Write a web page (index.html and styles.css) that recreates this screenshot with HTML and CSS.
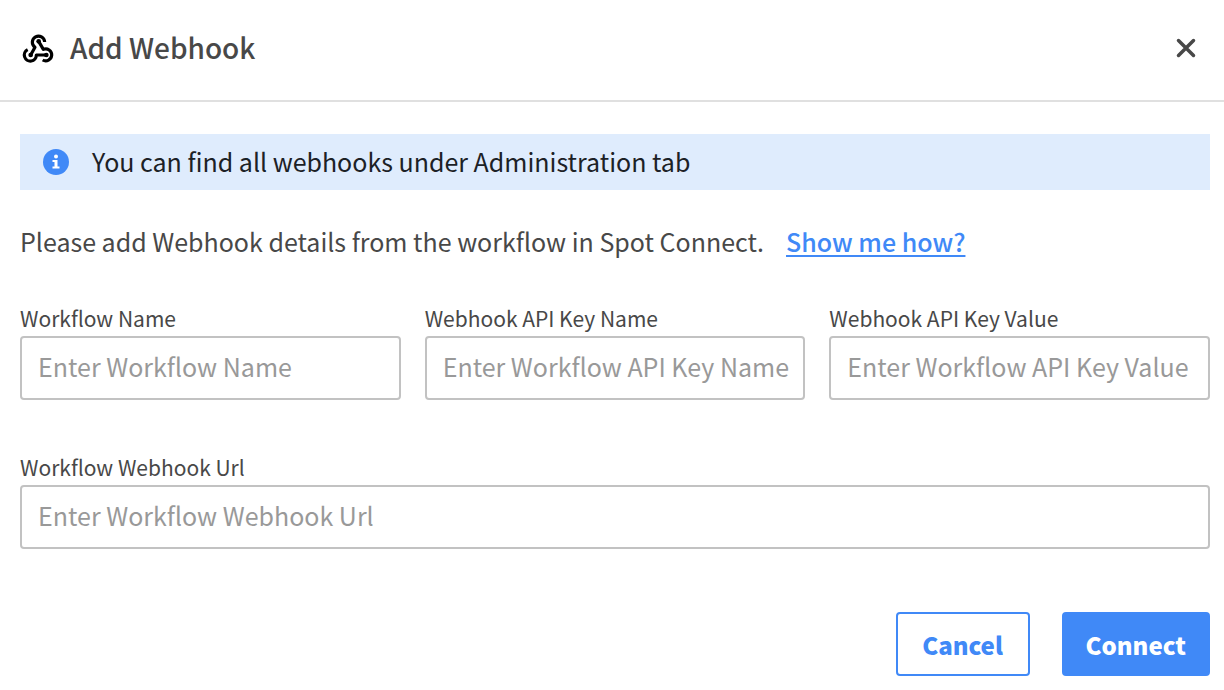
FILE: index.html
```html
<!DOCTYPE html>
<html lang="en">
<head>
<meta charset="utf-8">
<title>Add Webhook</title>
<link rel="stylesheet" href="styles.css">
</head>
<body>
<main class="dialog">
  <header class="dialog-header">
    <svg class="logo" viewBox="24 18 96 96" aria-hidden="true"><g fill="none" stroke="#000" stroke-width="9.500" stroke-linejoin="round"><path d="M50 87L63 64A18.500 18.500 0 1 1 92 48"/><path d="M74 46L88 70A18 18 0 1 1 86 102"/><path d="M97 87H67A18 18 0 1 1 41 71"/></g><g><circle cx="74" cy="46" r="7"/><circle cx="50" cy="87" r="7"/><circle cx="97" cy="87" r="7"/></g></svg>
    <h1 class="title">Add Webhook</h1>
    <button class="close" type="button" aria-label="Close"><svg viewBox="0 0 20 20"><path d="M2.500 2.500l15 15M17.500 2.500l-15 15"/></svg></button>
  </header>
  <form class="content">
    <div class="notice">
      <svg class="info" viewBox="0 0 26 26" aria-hidden="true"><circle cx="13" cy="13" r="13" fill="#4089f7"/><circle cx="13" cy="7.500" r="2" fill="#fff"/><path fill="#fff" d="M9.500 11h5v6.500h2v2h-7v-2h2V13h-2z"/></svg>
      <span>You can find all webhooks under Administration tab</span>
    </div>
    <p class="intro"><span>Please add Webhook details from the workflow in Spot Connect.</span><a class="link" href="#">Show me how?</a></p>
    <div class="fields">
      <div class="field"><label for="name">Workflow Name</label><input id="name" type="text" placeholder="Enter Workflow Name"></div>
      <div class="field"><label for="key">Webhook API Key Name</label><input id="key" type="text" placeholder="Enter Workflow API Key Name"></div>
      <div class="field"><label for="value">Webhook API Key Value</label><input id="value" type="text" placeholder="Enter Workflow API Key Value"></div>
      <div class="field field-wide"><label for="url">Workflow Webhook Url</label><input id="url" type="text" placeholder="Enter Workflow Webhook Url"></div>
    </div>
    <div class="actions">
      <button class="button" type="button">Cancel</button>
      <button class="button primary" type="submit">Connect</button>
    </div>
  </form>
</main>
</body>
</html>
```
FILE: styles.css
```css
* { box-sizing: border-box; }
body, input, button { font-family: "Noto Sans CJK SC", "Noto Sans", sans-serif; }
body { margin: 0; background: #fff; color: #484848; font-size: 25px; line-height: 32px; }
.dialog-header { display: flex; align-items: center; padding: 24px 24px 28px 22px; border-bottom: 2px solid #e0e0e0; }
.logo { width: 32px; height: 32px; }
.title { margin: 0 auto 0 16px; padding-bottom: 2px; font-size: 28px; line-height: 46px; font-weight: 500; }
.close { display: flex; padding: 4px; border: 0; background: none; }
.close svg { width: 20px; height: 20px; fill: none; stroke: #484848; stroke-width: 3.5; stroke-linecap: round; }
.content { padding: 32px 14px 14px 20px; }
.notice { display: flex; align-items: center; gap: 23px; padding: 12px 23px; background: #dfecfd; color: #1c2126; }
.notice span { padding-bottom: 2px; line-height: 30px; }
.info { width: 26px; height: 26px; flex: none; }
.intro { display: flex; gap: 22px; margin: 35px 0 45px; }
.link { color: #4089f7; font-weight: 500; text-decoration-thickness: 2px; text-underline-offset: 3px; }
.fields { display: grid; grid-template-columns: repeat(3, 1fr); gap: 51px 24px; }
.field { display: flex; flex-direction: column; min-width: 0; }
.field-wide { grid-column: 1 / -1; }
.field label { padding-bottom: 2px; font-size: 21px; line-height: 32px; }
.field input { width: 100%; height: 64px; padding: 0 14px 5px 16px; border: 2px solid #c2c2c2; border-radius: 4px; font-size: 25px; color: #484848; }
.field input::placeholder { color: #999; opacity: 1; }
.actions { display: flex; justify-content: flex-end; gap: 32px; margin-top: 63px; }
.button { min-width: 134px; height: 64px; padding: 0 22px; border: 2px solid #4089f7; border-radius: 4px; background: #fff; color: #4089f7; font-size: 24px; font-weight: 900; }
.primary { background: #4089f7; color: #fff; }
```
